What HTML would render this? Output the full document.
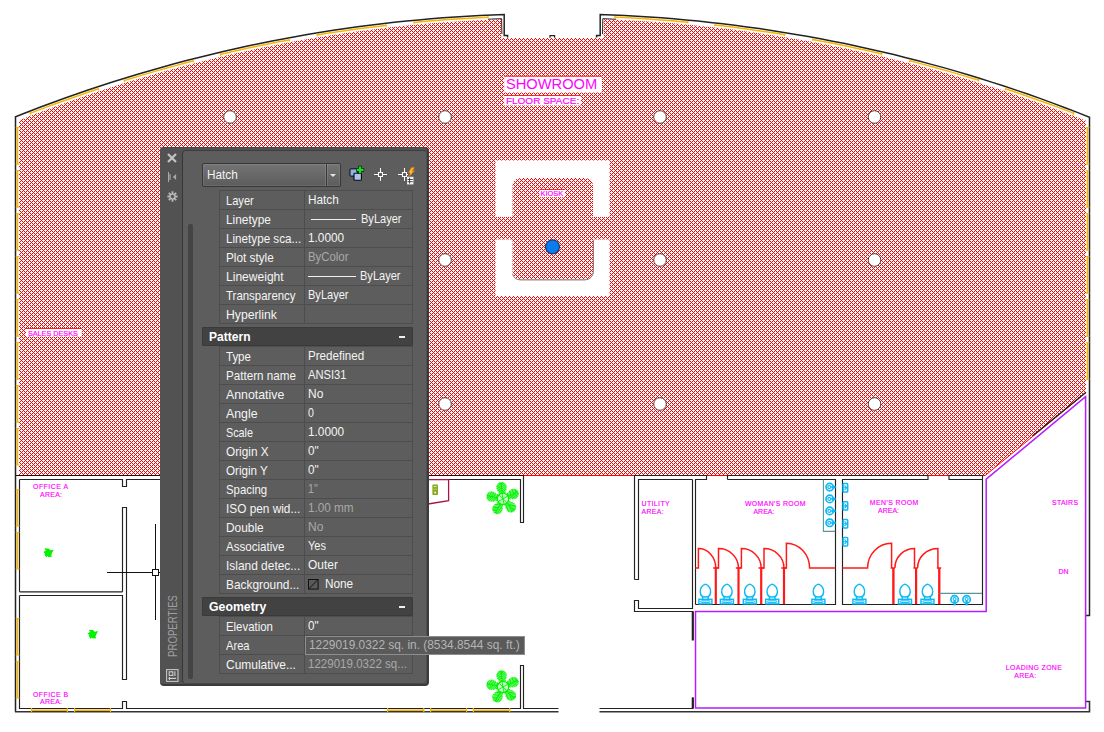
<!DOCTYPE html>
<html lang="en"><head><meta charset="utf-8"><title>Hatch properties</title>
<style>
html,body{margin:0;padding:0;background:#fff;}
body{width:1104px;height:732px;position:relative;overflow:hidden;font-family:"Liberation Sans",Arial,sans-serif;}
#dwg{position:absolute;left:0;top:0;display:block;}
#pal{position:absolute;left:160px;top:147px;width:269px;height:539px;box-sizing:border-box;background:#525252;border-radius:4px;border-right:2px solid #3b3b3b;border-bottom:2px solid #3b3b3b;box-shadow:inset 0 1px 0 #484848;}
#in{position:absolute;left:22px;top:3px;width:245px;height:534px;box-sizing:border-box;background:#5d5d5d;border-radius:4px;border-left:1px solid #363636;border-top:1px solid #3c3c3c;border-right:1px solid #4e4e4e;border-bottom:1px solid #4a4a4a;}
.t{display:inline-block;transform-origin:0 50%;white-space:nowrap;}
#sb{position:absolute;left:28px;top:77px;width:5px;height:455px;background:#444;border-radius:2px;}
.ic{position:absolute;left:6px;}
#dd{position:absolute;left:42px;top:16px;width:139px;height:24px;box-sizing:border-box;border:1px solid #383838;border-radius:2px;background:linear-gradient(#747474,#5c5c5c);box-shadow:inset 0 0 0 1px rgba(255,255,255,.09);color:#f2f2f2;font-size:12.4px;line-height:23px;padding-left:3.5px;}
#dd b{position:absolute;right:0;top:0;width:13px;height:22px;border-left:1px solid #383838;box-shadow:inset 1px 0 0 rgba(255,255,255,.12), -1px 0 0 rgba(255,255,255,.12);font-weight:normal;}
#dd b:after{content:"";position:absolute;left:3.2px;top:9.6px;border:3.4px solid transparent;border-top:3.8px solid #e6e6e6;border-bottom:0;}
.grp{position:absolute;left:59px;width:194px;}
.r{height:19px;display:flex;box-sizing:border-box;border-bottom:1px solid #4d4d4d;font-size:12.4px;line-height:19px;color:#f4f4f4;white-space:nowrap;}
.grp .r:first-child{border-top:1px solid #4d4d4d;height:20px;margin-top:-1px;}
.k{width:86px;box-sizing:border-box;border-left:1px solid #4d4d4d;border-right:1px solid #4d4d4d;padding-left:6px;overflow:hidden;padding-top:1px;}
.v{width:108px;box-sizing:border-box;border-right:1px solid #4d4d4d;padding-left:2.6px;overflow:hidden;position:relative;}
.dis{color:#a9a9a9;}
.lt .ln{left:6px;width:45px;}
.lt .bl{left:55.8px;}
.ln{position:absolute;left:2.6px;top:9px;width:48.4px;height:1px;background:#f0f0f0;}
.bl{position:absolute;left:54.6px;top:0;}
.sw{position:absolute;left:3.4px;top:4px;}
.bl2{position:absolute;left:19.6px;top:0;}
.hd{position:absolute;left:42px;width:211px;height:19px;box-sizing:border-box;background:#424242;border:1px solid #3a3a3a;border-radius:1px;color:#fff;font-weight:bold;font-size:12.6px;line-height:18px;padding-left:6px;}
.hd i{position:absolute;right:7px;top:8px;width:6px;height:2px;background:#f0f0f0;}
#tip{position:absolute;left:305px;top:636px;width:219.5px;height:19px;box-sizing:border-box;background:#5a5a5a;border:1px solid #8e8e8e;color:#b4b4b4;font-size:12.4px;line-height:17px;padding-left:3px;white-space:nowrap;font-family:"Liberation Sans",Arial,sans-serif;}
#vt{position:absolute;left:4px;top:449px;width:16px;height:66px;}
</style></head><body>
<svg id="dwg" width="1104" height="732" viewBox="0 0 1104 732">
<defs>
<pattern id="hp" x="1" y="0" width="4" height="4" patternUnits="userSpaceOnUse" shape-rendering="crispEdges"><rect width="4" height="4" fill="#fff"/><g fill="#ff0000"><rect x="0" y="0" width="1" height="1"/><rect x="1" y="1" width="1" height="1"/><rect x="2" y="2" width="1" height="1"/><rect x="3" y="3" width="1" height="1"/><rect x="1" y="3" width="1" height="1"/><rect x="3" y="1" width="1" height="1"/></g></pattern>
<g id="wc" fill="none" stroke="#0cb8f6" stroke-width="1.45"><path d="M0,-20.2 C3.4,-19.4 5.4,-15.6 5.2,-12.4 C5,-9 2.8,-7.2 0,-7.2 C-2.8,-7.2 -5,-9 -5.2,-12.4 C-5.4,-15.6 -3.4,-19.4 0,-20.2 Z"/><path d="M-2.8,-7.6 V-5 M2.8,-7.6 V-5"/><rect x="-6.5" y="-5" width="13" height="4.6"/><rect x="-4.8" y="-3.5" width="9.6" height="1.6" rx=".8" stroke-width="1"/></g>
<g id="sk" fill="none" stroke="#0cb8f6"><circle r="3.7" stroke-width="1.7"/><circle r="1.5" cx="-0.4" stroke-width="1.1"/><path d="M1.6,0 H6" stroke-width="2.4"/></g>
<g id="ur" fill="none" stroke="#0cb8f6" stroke-width="1.5"><rect x="-2.2" y="-4.2" width="4.6" height="8.4" rx=".8"/><path d="M-0.8,-2.4 L1.4,0 L-0.8,2.4 M-2.2,0 H1.4" stroke-width="1.1"/></g>
<g id="pl" fill="none" stroke="#00f200" stroke-width=".95"><g transform="rotate(-7)"><path d="M0,-4 L-4.6,-8 L-5.6,-12.4 L-3.8,-15.6 L0,-17 L3.8,-15.6 L5.6,-12.4 L4.6,-8 Z" fill="#00ff00" fill-opacity=".30" stroke="none"/><path d="M0,-4 V-16.8 M0,-4.2 l-3.5,-2.6 M0,-4.2 l3.5,-2.6 M0,-6.0 l-4.5,-3.4 M0,-6.0 l4.5,-3.4 M0,-7.8 l-5.0,-3.7 M0,-7.8 l5.0,-3.7 M0,-9.6 l-4.8,-3.6 M0,-9.6 l4.8,-3.6 M0,-11.4 l-4.2,-3.1 M0,-11.4 l4.2,-3.1 M0,-13.2 l-3.2,-2.4 M0,-13.2 l3.2,-2.4 M0,-14.8 l-2.1,-1.6 M0,-14.8 l2.1,-1.6"/></g><g transform="rotate(65)"><path d="M0,-4 L-4.6,-8 L-5.6,-12.4 L-3.8,-15.6 L0,-17 L3.8,-15.6 L5.6,-12.4 L4.6,-8 Z" fill="#00ff00" fill-opacity=".30" stroke="none"/><path d="M0,-4 V-16.8 M0,-4.2 l-3.5,-2.6 M0,-4.2 l3.5,-2.6 M0,-6.0 l-4.5,-3.4 M0,-6.0 l4.5,-3.4 M0,-7.8 l-5.0,-3.7 M0,-7.8 l5.0,-3.7 M0,-9.6 l-4.8,-3.6 M0,-9.6 l4.8,-3.6 M0,-11.4 l-4.2,-3.1 M0,-11.4 l4.2,-3.1 M0,-13.2 l-3.2,-2.4 M0,-13.2 l3.2,-2.4 M0,-14.8 l-2.1,-1.6 M0,-14.8 l2.1,-1.6"/></g><g transform="rotate(137)"><path d="M0,-4 L-4.6,-8 L-5.6,-12.4 L-3.8,-15.6 L0,-17 L3.8,-15.6 L5.6,-12.4 L4.6,-8 Z" fill="#00ff00" fill-opacity=".30" stroke="none"/><path d="M0,-4 V-16.8 M0,-4.2 l-3.5,-2.6 M0,-4.2 l3.5,-2.6 M0,-6.0 l-4.5,-3.4 M0,-6.0 l4.5,-3.4 M0,-7.8 l-5.0,-3.7 M0,-7.8 l5.0,-3.7 M0,-9.6 l-4.8,-3.6 M0,-9.6 l4.8,-3.6 M0,-11.4 l-4.2,-3.1 M0,-11.4 l4.2,-3.1 M0,-13.2 l-3.2,-2.4 M0,-13.2 l3.2,-2.4 M0,-14.8 l-2.1,-1.6 M0,-14.8 l2.1,-1.6"/></g><g transform="rotate(209)"><path d="M0,-4 L-4.6,-8 L-5.6,-12.4 L-3.8,-15.6 L0,-17 L3.8,-15.6 L5.6,-12.4 L4.6,-8 Z" fill="#00ff00" fill-opacity=".30" stroke="none"/><path d="M0,-4 V-16.8 M0,-4.2 l-3.5,-2.6 M0,-4.2 l3.5,-2.6 M0,-6.0 l-4.5,-3.4 M0,-6.0 l4.5,-3.4 M0,-7.8 l-5.0,-3.7 M0,-7.8 l5.0,-3.7 M0,-9.6 l-4.8,-3.6 M0,-9.6 l4.8,-3.6 M0,-11.4 l-4.2,-3.1 M0,-11.4 l4.2,-3.1 M0,-13.2 l-3.2,-2.4 M0,-13.2 l3.2,-2.4 M0,-14.8 l-2.1,-1.6 M0,-14.8 l2.1,-1.6"/></g><g transform="rotate(281)"><path d="M0,-4 L-4.6,-8 L-5.6,-12.4 L-3.8,-15.6 L0,-17 L3.8,-15.6 L5.6,-12.4 L4.6,-8 Z" fill="#00ff00" fill-opacity=".30" stroke="none"/><path d="M0,-4 V-16.8 M0,-4.2 l-3.5,-2.6 M0,-4.2 l3.5,-2.6 M0,-6.0 l-4.5,-3.4 M0,-6.0 l4.5,-3.4 M0,-7.8 l-5.0,-3.7 M0,-7.8 l5.0,-3.7 M0,-9.6 l-4.8,-3.6 M0,-9.6 l4.8,-3.6 M0,-11.4 l-4.2,-3.1 M0,-11.4 l4.2,-3.1 M0,-13.2 l-3.2,-2.4 M0,-13.2 l3.2,-2.4 M0,-14.8 l-2.1,-1.6 M0,-14.8 l2.1,-1.6"/></g><circle r="5.7" fill="#c4ffc4" stroke-width="1.2"/><path d="M-4,-3.8 L4,3.8 M-4.6,2.6 L4.6,-2.6 M-1,-5.4 L1,5.4" stroke-width=".9"/></g>
<g id="ps" fill="#00f400" stroke="#00f400" stroke-width="1" stroke-linejoin="round"><circle r="2.9"/><path d="M-3.6,-4 L0.4,-3.8 L1,-1 Z M4.6,-2.8 L2.6,0.6 L0.4,-1.4 Z M3,3.4 L-0.4,3.6 L0.8,0.8 Z M-2.2,4 L-3.6,1 L-0.6,1 Z M-4.6,-0.6 L-2,-2.6 L-1,0.4 Z"/></g>
</defs>
<rect width="1104" height="732" fill="#fff"/>
<polygon points="19.0,475.0 19.0,121.0 19.0,120.4 31.1,115.6 43.1,111.0 55.2,106.5 67.2,102.2 79.3,97.9 91.4,93.8 103.4,89.8 115.5,85.9 127.5,82.1 139.6,78.5 151.7,75.0 163.7,71.5 175.8,68.2 187.8,65.0 199.9,61.9 212.0,58.9 224.0,56.1 236.1,53.3 248.1,50.7 260.2,48.1 272.3,45.7 284.3,43.3 296.4,41.1 308.4,39.0 320.5,37.0 332.6,35.1 344.6,33.3 356.7,31.6 368.7,30.0 380.8,28.5 392.9,27.1 404.9,25.8 417.0,24.6 429.0,23.5 441.1,22.6 453.2,21.7 465.2,20.9 477.3,20.2 489.3,19.7 501.4,19.2 501.4,38.0 603.6,38.0 603.6,19.2 615.7,19.7 627.7,20.3 639.8,21.0 651.8,21.8 663.9,22.6 676.0,23.6 688.0,24.7 700.1,25.9 712.1,27.2 724.2,28.6 736.3,30.1 748.3,31.7 760.4,33.4 772.4,35.2 784.5,37.2 796.6,39.2 808.6,41.3 820.7,43.5 832.7,45.9 844.8,48.3 856.9,50.9 868.9,53.5 881.0,56.3 893.0,59.2 905.1,62.2 917.2,65.3 929.2,68.5 941.3,71.8 953.3,75.2 965.4,78.8 977.5,82.5 989.5,86.2 1001.6,90.1 1013.6,94.1 1025.7,98.3 1037.8,102.5 1049.8,106.9 1061.9,111.4 1073.9,116.0 1086.0,120.8 1086.0,392.0 985.5,475.0" fill="url(#hp)"/>
<circle cx="230" cy="117" r="6.3" fill="#fff" stroke="#333" stroke-width=".9"/>
<circle cx="445" cy="117" r="6.3" fill="#fff" stroke="#333" stroke-width=".9"/>
<circle cx="660" cy="117" r="6.3" fill="#fff" stroke="#333" stroke-width=".9"/>
<circle cx="874.5" cy="117" r="6.3" fill="#fff" stroke="#333" stroke-width=".9"/>
<circle cx="230" cy="260" r="6.3" fill="#fff" stroke="#333" stroke-width=".9"/>
<circle cx="445" cy="260" r="6.3" fill="#fff" stroke="#333" stroke-width=".9"/>
<circle cx="660" cy="260" r="6.3" fill="#fff" stroke="#333" stroke-width=".9"/>
<circle cx="874.5" cy="260" r="6.3" fill="#fff" stroke="#333" stroke-width=".9"/>
<circle cx="230" cy="404" r="6.3" fill="#fff" stroke="#333" stroke-width=".9"/>
<circle cx="445" cy="404" r="6.3" fill="#fff" stroke="#333" stroke-width=".9"/>
<circle cx="660" cy="404" r="6.3" fill="#fff" stroke="#333" stroke-width=".9"/>
<circle cx="874.5" cy="404" r="6.3" fill="#fff" stroke="#333" stroke-width=".9"/>
<path d="M495.5,160.5 H609.5 V217 H593 V186 a8,8 0 0 0 -8,-8 H520.5 a8,8 0 0 0 -8,8 V217 H495.5 Z" fill="#fff"/>
<path d="M495.5,296 H609.5 V239.5 H593 V271.5 a8,8 0 0 1 -8,8 H520.5 a8,8 0 0 1 -8,-8 V239.5 H495.5 Z" fill="#fff"/>
<path d="M593.4,240 V271.5 a8.4,8.4 0 0 1 -8.4,8.4 H520.5 a8.4,8.4 0 0 1 -8,-6" fill="none" stroke="#777" stroke-width="1"/>
<circle cx="552.5" cy="246.8" r="7" fill="#0a7cf2" stroke="#14406e" stroke-width="1.2"/>
<g font-family="'Liberation Sans', Arial, sans-serif" fill="#ff00ff" stroke="#ff00ff" stroke-width=".16">
<g stroke="none">
<rect x="504.2" y="76.7" width="97.8" height="15.8" fill="#fff" stroke="none"/>
<path d="M504.2,76.2 h97.8" stroke="#ff2020" stroke-width="1"/>
<text x="505.9" y="89.2" font-size="13.8" letter-spacing="0" textLength="91.3" lengthAdjust="spacingAndGlyphs">SHOWROOM</text>
</g>
<rect x="504.2" y="96" width="76.7" height="9.5" fill="#fff" stroke="none"/>
<path d="M504.2,95.5 h76.7" stroke="#ff2020" stroke-width="1"/>
<text x="505.9" y="104.4" font-size="8.4" letter-spacing="0" textLength="73.3" lengthAdjust="spacingAndGlyphs">FLOOR SPACE:</text>
<rect x="26" y="329" width="55.8" height="7.6" fill="#fff" stroke="none"/>
<path d="M26,328.5 h55.8" stroke="#ff2020" stroke-width="1"/>
<text x="27.9" y="335.6" font-size="6.6" letter-spacing="0" textLength="50" lengthAdjust="spacingAndGlyphs">SALES DESKS</text>
<rect x="539.5" y="190" width="25.5" height="7.2" fill="#fff" stroke="none"/>
<path d="M539.5,189.5 h25.5" stroke="#ff2020" stroke-width="1"/>
<text x="540.6" y="196.2" font-size="6.4" letter-spacing="0" textLength="22.5" lengthAdjust="spacingAndGlyphs">KIOSK</text>
<text x="33" y="489.4" font-size="6.9" textLength="35" lengthAdjust="spacing">OFFICE A</text>
<text x="40" y="496.6" font-size="6.9" textLength="22" lengthAdjust="spacing">AREA:</text>
<text x="33" y="697.2" font-size="6.9" textLength="35" lengthAdjust="spacing">OFFICE B</text>
<text x="40" y="704.2" font-size="6.9" textLength="22" lengthAdjust="spacing">AREA:</text>
<text x="641.6" y="506" font-size="6.9" textLength="28" lengthAdjust="spacing">UTILITY</text>
<text x="641.6" y="514.2" font-size="6.9" textLength="22" lengthAdjust="spacing">AREA:</text>
<text x="745" y="506" font-size="6.9" textLength="60.5" lengthAdjust="spacing">WOMAN'S ROOM</text>
<text x="753.4" y="514.2" font-size="6.9" textLength="21" lengthAdjust="spacing">AREA:</text>
<text x="869.8" y="505" font-size="6.9" textLength="48.5" lengthAdjust="spacing">MEN'S ROOM</text>
<text x="878" y="513.2" font-size="6.9" textLength="21" lengthAdjust="spacing">AREA:</text>
<text x="1052" y="505" font-size="6.9" textLength="26" lengthAdjust="spacing">STAIRS</text>
<text x="1058.6" y="574.2" font-size="6.9" textLength="10" lengthAdjust="spacing">DN</text>
<text x="1005.8" y="670.2" font-size="6.9" textLength="56" lengthAdjust="spacing">LOADING ZONE</text>
<text x="1014.2" y="678.2" font-size="6.9" textLength="22" lengthAdjust="spacing">AREA:</text>
</g>
<path d="M19,475.5 H985.2 L1086,392.6" fill="none" stroke="#ff0000" stroke-width="1"/>
<g fill="none" stroke="#222" stroke-width="1.15">
<polyline points="15.5,712.0 15.5,117.3 15.5,116.8 27.7,112.0 39.9,107.3 52.2,102.7 64.4,98.3 76.6,94.0 88.8,89.8 101.0,85.7 113.2,81.8 125.5,78.0 137.7,74.3 149.9,70.7 162.1,67.2 174.3,63.8 186.5,60.6 198.8,57.5 211.0,54.4 223.2,51.5 235.4,48.7 247.6,46.1 259.9,43.5 272.1,41.0 284.3,38.7 296.5,36.4 308.7,34.3 320.9,32.3 333.2,30.3 345.4,28.5 357.6,26.8 369.8,25.2 382.0,23.7 394.2,22.3 406.5,21.0 418.7,19.9 430.9,18.8 443.1,17.8 455.3,16.9 467.5,16.2 479.8,15.5 492.0,14.9 504.2,14.5 504.2,35.6 507.6,35.6 507.6,37.6" stroke-width="1.5"/>
<polyline points="596.6,37.6 596.6,35.6 600.2,35.6 600.2,14.5 612.4,15.0 624.7,15.5 636.9,16.2 649.1,17.0 661.4,17.8 673.6,18.8 685.8,19.9 698.1,21.1 710.3,22.4 722.5,23.8 734.8,25.3 747.0,26.9 759.2,28.6 771.5,30.4 783.7,32.4 795.9,34.4 808.2,36.5 820.4,38.8 832.6,41.2 844.9,43.6 857.1,46.2 869.3,48.9 881.5,51.7 893.8,54.6 906.0,57.7 918.2,60.8 930.5,64.1 942.7,67.4 954.9,70.9 967.2,74.5 979.4,78.2 991.6,82.1 1003.9,86.0 1016.1,90.1 1028.3,94.3 1040.6,98.6 1052.8,103.1 1065.0,107.7 1077.3,112.4 1089.5,117.2 1089.5,615.5 1086.0,615.5" stroke-width="1.5"/>
<polyline points="488.0,19.2 491.4,19.1 494.8,18.9 498.2,18.8 501.6,18.7 501.9,34.0" stroke-width="1"/>
<polyline points="602.5,34.0 602.8,18.7 606.1,18.8 609.4,18.9 612.7,19.1 616.0,19.2" stroke-width="1"/>
<path d="M550,37.8 V35.6 H554.6 V37.8" stroke-width="1.2"/>
<path d="M15,711.7 H558.5 M599.5,711.7 H1089.5 M1089.5,712.4 V701.5 H1086" stroke-width="1.6" stroke="#333"/>
<path d="M19.5,479.5 V591.8 M19.5,595.5 V708.5 H122.5 V701.5 H126.5 V708.5 H520.5 V665.5 H523.5 V708.5 H558.5 M599.5,708.5 H693.5 M692.8,708.5 V697.5" /><path d="M692.8,611.5 V640.5 M692.8,697.5 V708.5" stroke-width="2.2"/>
<path d="M15.5,475.5 H523.5" stroke="#2a0505"/><path d="M523.5,475.5 V522.5 H520.5 V479.5 H428" stroke-width="1.15"/>
<path d="M19.5,479.5 H122.5 V486.5 H126.5 V479.5 H160"/>
<path d="M122.5,591.8 V507.5 H126.5 V679.5 H122.5 V595.5 H19.5 M19.5,591.8 H122.5"/>
<path d="M107,572.5 H160 M155.5,524 V620" stroke="#111" stroke-width="1"/><rect x="152.5" y="569.5" width="6" height="6" fill="#fff" stroke="#111" stroke-width="1"/>
<path d="M634.5,579.5 V475.5 H706.5 V479.5 H695.5 V604.5 M692.5,479.5 H638.5 V579.5 H634.5"/>
<path d="M692.5,479.5 V608.5 H638.5 V600.5 H634.5 V611.5 H693.5"/>
<path d="M727.5,479.5 V475.5 H928 V479.5 H842.5 V604.5 H982.5 V475.5 H949 V479.5 H982.5 M727.5,479.5 H835.5 V604.5 H695.5"/>
<path d="M1033,435.6 L1086,392.2" stroke-width="1.3"/>
</g>
<g fill="none" stroke="#f7b500" stroke-width="1.2">
<path d="M17.5,127.5 V164.1" stroke-width="1.6"/><path d="M15.8,127.5 h3.6 M15.8,164.1 h3.6"/>
<path d="M1087.4,127.5 V164.1" stroke-width="1.6"/><path d="M1086,127.5 h3.4 M1086,164.1 h3.4"/>
<path d="M17.5,170.5 V207.1" stroke-width="1.6"/><path d="M15.8,170.5 h3.6 M15.8,207.1 h3.6"/>
<path d="M1087.4,170.5 V207.1" stroke-width="1.6"/><path d="M1086,170.5 h3.4 M1086,207.1 h3.4"/>
<path d="M17.5,213.5 V250.1" stroke-width="1.6"/><path d="M15.8,213.5 h3.6 M15.8,250.1 h3.6"/>
<path d="M1087.4,213.5 V250.1" stroke-width="1.6"/><path d="M1086,213.5 h3.4 M1086,250.1 h3.4"/>
<path d="M17.5,256.5 V293.1" stroke-width="1.6"/><path d="M15.8,256.5 h3.6 M15.8,293.1 h3.6"/>
<path d="M1087.4,256.5 V293.1" stroke-width="1.6"/><path d="M1086,256.5 h3.4 M1086,293.1 h3.4"/>
<path d="M17.5,299.5 V336.1" stroke-width="1.6"/><path d="M15.8,299.5 h3.6 M15.8,336.1 h3.6"/>
<path d="M1087.4,299.5 V336.1" stroke-width="1.6"/><path d="M1086,299.5 h3.4 M1086,336.1 h3.4"/>
<path d="M17.5,342.5 V379.1" stroke-width="1.6"/><path d="M15.8,342.5 h3.6 M15.8,379.1 h3.6"/>
<path d="M1087.4,342.5 V379.1" stroke-width="1.6"/><path d="M1086,342.5 h3.4 M1086,379.1 h3.4"/>
<path d="M17.5,385.5 V422.1" stroke-width="1.6"/><path d="M15.8,385.5 h3.6 M15.8,422.1 h3.6"/>
<path d="M17.5,428.5 V465" stroke-width="1.6"/><path d="M15.8,428.5 h3.6 M15.8,465 h3.6"/>
<path d="M17.5,489.6 V525.8" stroke-width="1.6"/><path d="M15.8,489.6 h3.6 M15.8,525.8 h3.6"/>
<path d="M17.5,532.5 V568.8" stroke-width="1.6"/><path d="M15.8,532.5 h3.6 M15.8,568.8 h3.6"/>
<path d="M17.5,618.5 V654.8" stroke-width="1.6"/><path d="M15.8,618.5 h3.6 M15.8,654.8 h3.6"/>
<path d="M17.5,661.5 V697.8" stroke-width="1.6"/><path d="M15.8,661.5 h3.6 M15.8,697.8 h3.6"/>
<path d="M31.5,710.3 H67.3" stroke-width="1.6"/><path d="M31.5,708 v4 M67.3,708 v4"/>
<path d="M74.6,710.3 H110.5" stroke-width="1.6"/><path d="M74.6,708 v4 M110.5,708 v4"/>
<path d="M387.6,710.3 H423.8" stroke-width="1.6"/><path d="M387.6,708 v4 M423.8,708 v4"/>
<path d="M430.6,710.3 H466.6" stroke-width="1.6"/><path d="M430.6,708 v4 M466.6,708 v4"/>
<path d="M473.4,710.3 H509.7" stroke-width="1.6"/><path d="M473.4,708 v4 M509.7,708 v4"/>
<polyline points="30.0,113.4 38.5,110.1 47.0,106.9 55.5,103.8 64.0,100.7 72.5,97.7 81.0,94.7 89.5,91.8 98.0,89.0" stroke-width="1.5"/>
<path d="M29.9,112.0 L30.9,114.7"/>
<path d="M97.9,87.6 L98.8,90.3"/>
<polyline points="124.0,80.6 132.6,78.0 141.2,75.4 149.9,72.9 158.5,70.4 167.1,68.0 175.8,65.6 184.4,63.3 193.0,61.1" stroke-width="1.5"/>
<path d="M123.9,79.3 L124.7,82.0"/>
<path d="M192.9,59.8 L193.6,62.4"/>
<polyline points="220.0,54.4 228.6,52.4 237.2,50.5 245.9,48.6 254.5,46.7 263.1,45.0 271.8,43.2 280.4,41.6 289.0,39.9" stroke-width="1.5"/>
<path d="M220.0,53.1 L220.6,55.8"/>
<path d="M289.0,38.6 L289.4,41.3"/>
<polyline points="317.0,35.0 325.6,33.6 334.2,32.3 342.9,31.0 351.5,29.8 360.1,28.6 368.8,27.5 377.4,26.4 386.0,25.4" stroke-width="1.5"/>
<path d="M317.0,33.7 L317.4,36.3"/>
<path d="M386.0,24.1 L386.3,26.7"/>
<polyline points="414.0,22.4 423.2,21.5 432.5,20.7 441.8,20.0 451.0,19.3 460.2,18.7 469.5,18.2 478.8,17.7 488.0,17.2" stroke-width="1.5"/>
<path d="M414.0,21.1 L414.2,23.7"/>
<path d="M488.0,15.9 L488.1,18.5"/>
<polyline points="615.0,17.2 624.1,17.6 633.2,18.1 642.4,18.6 651.5,19.2 660.6,19.9 669.8,20.6 678.9,21.4 688.0,22.2" stroke-width="1.5"/>
<path d="M615.0,15.9 L614.9,18.5"/>
<path d="M688.0,20.9 L687.8,23.5"/>
<polyline points="715.0,25.0 723.8,26.0 732.5,27.1 741.2,28.2 750.0,29.4 758.8,30.7 767.5,32.0 776.2,33.3 785.0,34.7" stroke-width="1.5"/>
<path d="M715.0,23.7 L714.7,26.3"/>
<path d="M785.0,33.4 L784.6,36.0"/>
<polyline points="813.0,39.6 821.6,41.2 830.2,42.8 838.9,44.6 847.5,46.3 856.1,48.2 864.8,50.0 873.4,52.0 882.0,54.0" stroke-width="1.5"/>
<path d="M813.0,38.2 L812.6,40.9"/>
<path d="M882.0,52.6 L881.4,55.3"/>
<polyline points="910.0,60.8 918.6,63.1 927.2,65.4 935.9,67.7 944.5,70.1 953.1,72.6 961.8,75.1 970.4,77.7 979.0,80.3" stroke-width="1.5"/>
<path d="M910.1,59.5 L909.4,62.2"/>
<path d="M979.1,79.0 L978.3,81.7"/>
<polyline points="1006.0,89.0 1014.5,91.8 1023.0,94.7 1031.5,97.7 1040.0,100.7 1048.5,103.8 1057.0,106.9 1065.5,110.1 1074.0,113.4" stroke-width="1.5"/>
<path d="M1006.1,87.6 L1005.2,90.3"/>
<path d="M1074.1,112.0 L1073.1,114.7"/>
</g>
<path d="M695.5,611.6 H986.2 V479.2 L1085.6,396.6 V708 H695.5 Z" fill="none" stroke="#b41eff" stroke-width="1.5"/>
<g fill="none" stroke="#ff1a1a" stroke-width="1.5">
<path d="M695.4,568 h3 V548.6 A17.399999999999956,19.6 0 0 1 715.8,568 M713.0999999999999,568 h5.4"/><path d="M715.8,567.6 V604" stroke-width="2.2"/>
<path d="M715.5,568 h3 V548.6 A19.99999999999998,19.6 0 0 1 738.5,568 M735.8,568 h5.4"/><path d="M738.5,567.6 V604" stroke-width="2.2"/>
<path d="M738.4,568 h3 V548.6 A19.800000000000047,19.6 0 0 1 761.2,568 M758.5,568 h5.4"/><path d="M761.2,567.6 V604" stroke-width="2.2"/>
<path d="M761.0,568 h3 V548.6 A19.99999999999998,19.6 0 0 1 784,568 M781.3,568 h5.4"/><path d="M784,567.6 V604" stroke-width="2.2"/>
<path d="M783.4,568 h3 V543.2 A23.3,24.8 0 0 1 809.6,568 H835.3"/>
<path d="M842.4,568 H867.6 A24,24.8 0 0 1 891.6,543.2 V568 M893.4,568 V604 M890.6,568 h4.4" />
<path d="M894.9,568 A19.6,19.6 0 0 1 914.5,548.4 V568 M916.1,568 V604 M913.4,568 h4.4"/>
<path d="M917.6,568 A20.3,19.6 0 0 1 937.9,548.4 V568 M939.3,568 V604 M936.8,568 h4.4"/>
<path d="M893.4,568 V604 M916.1,568 V604 M939.3,568 V604" stroke-width="2.2"/>
</g>
<use href="#wc" x="705.4" y="604.3"/>
<use href="#wc" x="726.9" y="604.3"/>
<use href="#wc" x="749.8" y="604.3"/>
<use href="#wc" x="772.2" y="604.3"/>
<use href="#wc" x="818.4" y="604.3"/>
<use href="#wc" x="859.4" y="604.3"/>
<use href="#wc" x="905" y="604.3"/>
<use href="#wc" x="927.5" y="604.3"/>
<path d="M823.4,479.8 V531.4 H835.3" fill="none" stroke="#5a9696" stroke-width="1.1"/>
<use href="#sk" x="829.7" y="487.1"/>
<use href="#sk" x="829.7" y="498.9"/>
<use href="#sk" x="829.7" y="510.9"/>
<use href="#sk" x="829.7" y="522.8"/>
<use href="#ur" x="845.3" y="487.8"/>
<use href="#ur" x="845.3" y="505.9"/>
<use href="#ur" x="845.3" y="523.7"/>
<use href="#ur" x="845.3" y="541.7"/>
<path d="M939.4,593.4 H982" fill="none" stroke="#5a9696" stroke-width="1.1"/>
<g transform="translate(954.6,599.4) rotate(90)"><use href="#sk"/></g>
<g transform="translate(966.6,599.4) rotate(90)"><use href="#sk"/></g>
<use href="#pl" x="503" y="498.8"/><use href="#pl" x="503" y="687"/>
<use href="#ps" x="48.5" y="552.9"/><use href="#ps" x="92.8" y="634.4"/>
<path d="M428,479.6 H448.6 V500.6 L428,504" fill="none" stroke="#a81440" stroke-width="1.3"/>
<rect x="432.4" y="484.6" width="5.6" height="10.4" rx=".8" fill="#86a81a"/><path d="M433.8,486.6 h2.8 M433.8,489.2 h1 M435.6,489.2 h1" stroke="#f4f8e0" stroke-width=".9"/><circle cx="435.2" cy="492.4" r="1" fill="#f8fbe8"/>
</svg>
<div id="pal">
 <svg class="ic" style="top:5px" width="12" height="12" viewBox="0 0 12 12"><path d="M2,2 L10,10 M10,2 L2,10" stroke="#c4c4c4" stroke-width="2.2"/></svg>
 <svg class="ic" style="top:24px" width="12" height="12" viewBox="0 0 12 12"><path d="M2.5,1 V11" stroke="#a8a8a8" stroke-width="1"/><rect x="3" y="3" width="2" height="6" fill="#858585"/><path d="M10.1,3 V9 L6.8,6 Z" fill="#a6a6a6"/></svg>
 <svg class="ic" style="top:43.6px;left:6.6px" width="11" height="11" viewBox="0 0 12 12"><g stroke="#b8b8b8" stroke-width="2"><path d="M6,.4 V11.6 M.4,6 H11.6 M2,2 L10,10 M10,2 L2,10"/></g><circle cx="6" cy="6" r="3.3" fill="#b8b8b8"/><circle cx="6" cy="6" r="1.8" fill="#525252"/></svg>
 <svg id="vt" viewBox="0 0 16 66"><text transform="translate(12.7,61) rotate(-90)" font-family="'Liberation Sans',Arial,sans-serif" font-size="13.2" fill="#9e9e9e" textLength="62" lengthAdjust="spacingAndGlyphs">PROPERTIES</text></svg>
 <svg class="ic" style="top:522px;left:5.6px" width="13" height="13" viewBox="0 0 13 13"><rect x=".6" y=".6" width="11.4" height="11.8" fill="none" stroke="#c6c6c6" stroke-width="1.1"/><rect x="3.2" y="2.8" width="3.6" height="3.6" fill="none" stroke="#d0d0d0" stroke-width="1.1"/><path d="M8.9,2.3 V6.9 M2.4,9.4 H10.2 M3.5,7.9 V10.9" stroke="#d0d0d0" stroke-width="1.1"/></svg>
 <div id="in"></div>
 <div id="sb"></div>
 <div id="dd"><span class="t" style="transform:scaleX(0.951)">Hatch</span><b></b></div>
 <svg style="position:absolute;left:184px;top:13px" width="80" height="30" viewBox="0 0 80 30">
  <rect x="6" y="8.9" width="7.4" height="7.2" rx=".8" fill="#8db3ea" stroke="#0a0a0a" stroke-width="1"/>
  <rect x="10" y="13.2" width="7.4" height="7" rx=".8" fill="#a8c5ec" stroke="#0a0a0a" stroke-width="1.1"/>
  <path d="M16.1,5.8 V14 M12.1,9.9 H20.2" stroke="#08300c" stroke-width="3.6"/>
  <path d="M16.1,6.5 V13.3 M12.8,9.9 H19.5" stroke="#20d630" stroke-width="2.2"/>
  <g stroke="#fafafa" stroke-width="1" fill="none" shape-rendering="crispEdges">
   <path d="M36.5,8 V21 M30,14.5 H43"/><rect x="34.5" y="12.5" width="4" height="4" fill="#5d5d5d"/>
   <path d="M60.5,8 V21 M54,14.5 H64"/><rect x="58.5" y="12.5" width="4" height="4" fill="#5d5d5d"/>
  </g>
  <path d="M67.4,7.4 L70.6,7.4 L68.6,10.8 L70.6,10.8 L64.8,16.6 L66.4,12.8 L64.4,12.8 Z" fill="#f8981c" stroke="#e07c10" stroke-width=".5"/><path d="M68.4,8.4 L66,12 H67.6 L66.4,14.4" stroke="#ffd64a" stroke-width=".9" fill="none"/>
  <rect x="63.4" y="17.2" width="5.6" height="6.8" fill="#fbfbfb" stroke="#fbfbfb" stroke-width=".8"/>
  <path d="M63.6,19.5 h5.2 M63.6,21.7 h5.2 M65.6,17.6 v6" stroke="#333" stroke-width=".9"/>
 </svg>
 <div class="grp" style="top:44px"><div class="r"><div class="k"><span class="t" style="transform:scaleX(0.896)">Layer</span></div><div class="v "><span class="t" style="transform:scaleX(0.951)">Hatch</span></div></div><div class="r"><div class="k"><span class="t" style="transform:scaleX(0.958)">Linetype</span></div><div class="v lt"><i class="ln"></i><span class="bl"><span class="t" style="transform:scaleX(0.892)">ByLayer</span></span></div></div><div class="r"><div class="k"><span class="t" style="transform:scaleX(0.942)">Linetype sca...</span></div><div class="v "><span class="t" style="transform:scaleX(0.954)">1.0000</span></div></div><div class="r"><div class="k"><span class="t" style="transform:scaleX(0.950)">Plot style</span></div><div class="v dis"><span class="t" style="transform:scaleX(0.918)">ByColor</span></div></div><div class="r"><div class="k"><span class="t" style="transform:scaleX(0.973)">Lineweight</span></div><div class="v "><i class="ln"></i><span class="bl"><span class="t" style="transform:scaleX(0.892)">ByLayer</span></span></div></div><div class="r"><div class="k"><span class="t" style="transform:scaleX(0.924)">Transparency</span></div><div class="v "><span class="t" style="transform:scaleX(0.892)">ByLayer</span></div></div><div class="r"><div class="k"><span class="t" style="transform:scaleX(0.987)">Hyperlink</span></div><div class="v "></div></div></div>
 <div class="hd" style="top:180px"><span class="t" style="transform:scaleX(0.956)">Pattern</span><i></i></div>
 <div class="grp" style="top:200px"><div class="r"><div class="k"><span class="t" style="transform:scaleX(0.926)">Type</span></div><div class="v "><span class="t" style="transform:scaleX(0.937)">Predefined</span></div></div><div class="r"><div class="k"><span class="t" style="transform:scaleX(0.939)">Pattern name</span></div><div class="v "><span class="t" style="transform:scaleX(0.903)">ANSI31</span></div></div><div class="r"><div class="k"><span class="t" style="transform:scaleX(0.995)">Annotative</span></div><div class="v "><span class="t" style="transform:scaleX(0.965)">No</span></div></div><div class="r"><div class="k"><span class="t" style="transform:scaleX(0.993)">Angle</span></div><div class="v "><span class="t" style="transform:scaleX(0.856)">0</span></div></div><div class="r"><div class="k"><span class="t" style="transform:scaleX(0.870)">Scale</span></div><div class="v "><span class="t" style="transform:scaleX(0.954)">1.0000</span></div></div><div class="r"><div class="k"><span class="t" style="transform:scaleX(0.951)">Origin X</span></div><div class="v "><span class="t" style="transform:scaleX(0.938)">0&quot;</span></div></div><div class="r"><div class="k"><span class="t" style="transform:scaleX(0.940)">Origin Y</span></div><div class="v "><span class="t" style="transform:scaleX(0.938)">0&quot;</span></div></div><div class="r"><div class="k"><span class="t" style="transform:scaleX(0.919)">Spacing</span></div><div class="v dis"><span class="t" style="transform:scaleX(0.859)">1&quot;</span></div></div><div class="r"><div class="k"><span class="t" style="transform:scaleX(0.954)">ISO pen wid...</span></div><div class="v dis"><span class="t" style="transform:scaleX(0.947)">1.00 mm</span></div></div><div class="r"><div class="k"><span class="t" style="transform:scaleX(0.959)">Double</span></div><div class="v dis"><span class="t" style="transform:scaleX(0.965)">No</span></div></div><div class="r"><div class="k"><span class="t" style="transform:scaleX(0.934)">Associative</span></div><div class="v "><span class="t" style="transform:scaleX(0.885)">Yes</span></div></div><div class="r"><div class="k"><span class="t" style="transform:scaleX(0.962)">Island detec...</span></div><div class="v "><span class="t" style="transform:scaleX(0.964)">Outer</span></div></div><div class="r"><div class="k"><span class="t" style="transform:scaleX(0.959)">Background...</span></div><div class="v "><svg class="sw" width="11" height="11" viewBox="0 0 11 11"><rect x=".5" y=".5" width="9.6" height="9.6" fill="#5a5a5a" stroke="#111"/><path d="M1,9.6 L9.6,1" stroke="#111"/></svg><span class="bl2"><span class="t" style="transform:scaleX(0.951)">None</span></span></div></div></div>
 <div class="hd" style="top:450px"><span class="t" style="transform:scaleX(0.976)">Geometry</span><i></i></div>
 <div class="grp" style="top:470px"><div class="r"><div class="k"><span class="t" style="transform:scaleX(0.919)">Elevation</span></div><div class="v "><span class="t" style="transform:scaleX(0.938)">0&quot;</span></div></div><div class="r"><div class="k"><span class="t" style="transform:scaleX(0.901)">Area</span></div><div class="v "></div></div><div class="r"><div class="k"><span class="t" style="transform:scaleX(0.967)">Cumulative...</span></div><div class="v dis"><span class="t" style="transform:scaleX(0.932)">1229019.0322 sq...</span></div></div></div>
</div>
<div id="tip"><span class="t" style="transform:scaleX(0.959)">1229019.0322 sq. in. (8534.8544 sq. ft.)</span></div>
</body></html>
